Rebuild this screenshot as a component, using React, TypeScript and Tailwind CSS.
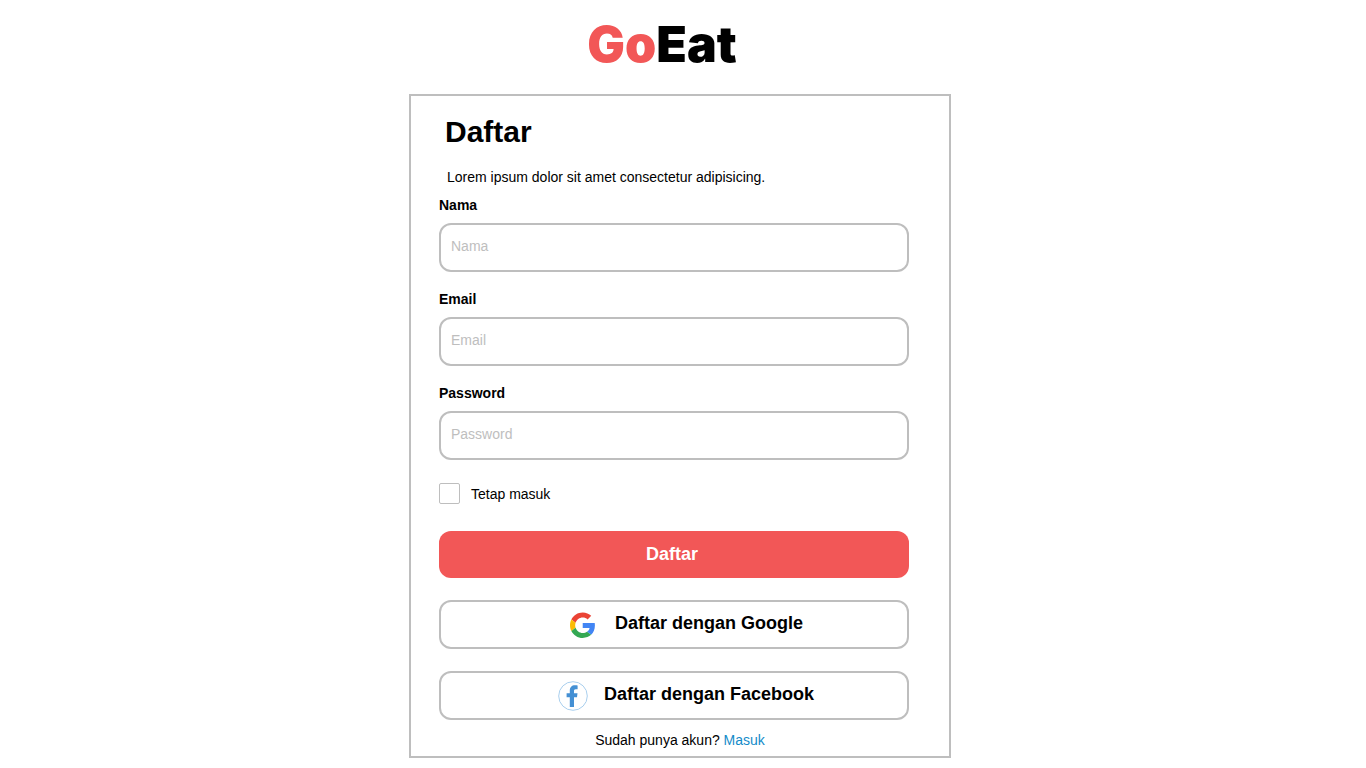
import type { ReactNode } from 'react';

function Field({ id, label, type }: { id: string; label: string; type: string }) {
  return (
    <div className="flex flex-col gap-2">
      <label htmlFor={id} className="self-start text-sm font-bold">
        {label}
      </label>
      <input
        id={id}
        type={type}
        placeholder={label}
        className="h-[49px] w-full rounded-xl border-2 border-[#bebebe] bg-white px-2.5 pb-1 text-sm outline-none placeholder:text-[#bebebe] focus:border-[#f25757]"
      />
    </div>
  );
}

function SocialButton({ icon, children }: { icon: ReactNode; children: ReactNode }) {
  return (
    <button
      type="button"
      className="flex h-[49px] w-full cursor-pointer items-center justify-center gap-4 rounded-xl border-2 border-[#bebebe] bg-white pl-6 text-lg font-bold"
    >
      {icon}
      <span className="pb-1">{children}</span>
    </button>
  );
}

function GoogleIcon() {
  return (
    <svg viewBox="0 0 30 30" className="size-[30px]" aria-hidden="true">
      <g transform="translate(1 2.5) scale(.53)">
        <path fill="#EA4335" d="M24 9.5c3.54 0 6.71 1.22 9.21 3.6l6.85-6.85C35.9 2.38 30.47 0 24 0 14.62 0 6.51 5.38 2.56 13.22l7.98 6.19C12.43 13.72 17.74 9.5 24 9.5z" />
        <path fill="#4285F4" d="M46.98 24.55c0-1.57-.15-3.09-.38-4.55H24v9.02h12.94c-.58 2.96-2.26 5.48-4.78 7.18l7.73 6c4.51-4.18 7.09-10.36 7.09-17.65z" />
        <path fill="#FBBC05" d="M10.53 28.59c-.48-1.45-.76-2.99-.76-4.59s.27-3.14.76-4.59l-7.98-6.19C.92 16.46 0 20.12 0 24c0 3.88.92 7.54 2.56 10.78l7.97-6.19z" />
        <path fill="#34A853" d="M24 48c6.48 0 11.93-2.13 15.89-5.81l-7.73-6c-2.15 1.45-4.92 2.3-8.16 2.3-6.26 0-11.57-4.22-13.47-9.91l-7.98 6.19C6.51 42.62 14.62 48 24 48z" />
      </g>
    </svg>
  );
}

function FacebookIcon() {
  return (
    <svg viewBox="0 0 30 30" className="size-[30px]" aria-hidden="true">
      <circle cx="15" cy="15" r="14.3" fill="#fff" stroke="#a9cfee" />
      <path fill="#4490d4" d="M11.8 26V16.2H8.6v-4h3.2V9.8c0-3.6 2-5.5 5.2-5.5 1 0 2 .1 2.6.2v3.7h-1.9c-1.3 0-1.7.8-1.7 1.8v2.2h3.5l-.5 4h-3V26z" />
    </svg>
  );
}

export default function App() {
  return (
    <div className="flex min-h-screen flex-col items-center bg-white pr-1.5 pb-2.5 font-['Liberation_Sans',Arial,sans-serif] text-black">
      <header className="flex h-[94px] items-center pr-9 pb-1.5">
        <h1 className="font-['Inter',sans-serif] text-[50px] leading-none font-black">
          <span className="text-[#f25757]">Go</span>Eat
        </h1>
      </header>

      <main className="w-full max-w-[542px] border-2 border-[#bebebe] pt-[18px] pr-10 pb-1.5 pl-7">
        <form onSubmit={(event) => event.preventDefault()}>
          <h2 className="pl-1.5 text-3xl font-bold">Daftar</h2>
          <p className="mt-[17px] pl-2 text-sm">Lorem ipsum dolor sit amet consectetur adipisicing.</p>

          <div className="mt-2 flex flex-col gap-[17px]">
            <Field id="nama" label="Nama" type="text" />
            <Field id="email" label="Email" type="email" />
            <Field id="password" label="Password" type="password" />
          </div>

          <label className="mt-[23px] flex items-center gap-[11px] text-sm">
            <input
              type="checkbox"
              className="size-[21px] appearance-none rounded-xs border border-[#bebebe] bg-white checked:bg-[#f25757]"
            />
            Tetap masuk
          </label>

          <button
            type="submit"
            className="mt-[27px] h-[47px] w-full cursor-pointer rounded-xl bg-[#f25757] pr-1 pb-0.5 text-lg font-bold text-white"
          >
            Daftar
          </button>

          <div className="mt-[22px] flex flex-col gap-[22px]">
            <SocialButton icon={<GoogleIcon />}>Daftar dengan Google</SocialButton>
            <SocialButton icon={<FacebookIcon />}>Daftar dengan Facebook</SocialButton>
          </div>

          <p className="mt-2.5 pl-3 text-center text-sm">
            Sudah punya akun?{' '}
            <a href="#masuk" className="text-[#138bc9]">
              Masuk
            </a>
          </p>
        </form>
      </main>
    </div>
  );
}
